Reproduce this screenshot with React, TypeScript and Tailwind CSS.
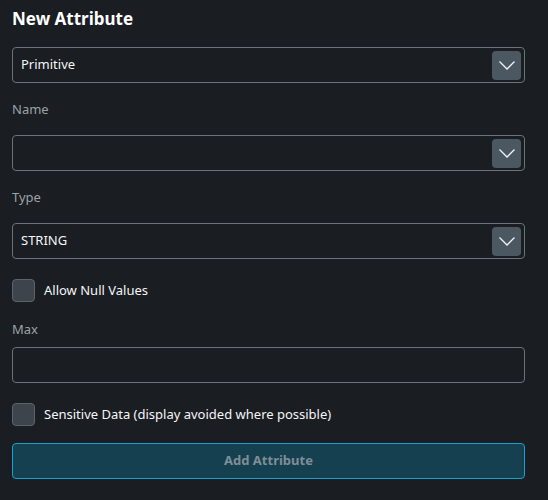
import { useState } from 'react'

function Chevron() {
	return (
		<svg width="18" height="18" viewBox="0 0 18 18" fill="none">
			<path d="M1.5 5.5 9 13l7.5-7.5" stroke="#f1f3f5" strokeWidth="1.3" />
		</svg>
	)
}

function SelectBox({ value }: { value: string }) {
	return (
		<div className="h-9 w-full flex items-center justify-between rounded-[4px] border border-[#68737c] bg-[#1a1d21] pl-2 pr-[3px]">
			<span className="text-[13px] text-[#f4f6f8]">{value}</span>
			<div className="h-[29px] w-[29px] flex items-center justify-center rounded-[4px] bg-[#4c5861]">
				<Chevron />
			</div>
		</div>
	)
}

function Check({ label }: { label: string }) {
	const [on, setOn] = useState(false)
	return (
		<label className="flex items-center gap-[9px] cursor-pointer">
			<span
				onClick={() => setOn(!on)}
				className="h-[23px] w-[23px] rounded-[4px] border border-[#5a646d] bg-[#3e444b]"
			/>
			<span className="text-[13px] text-[#f4f6f8]">{label}</span>
		</label>
	)
}

function Label({ children }: { children: string }) {
	return <div className="text-[13px] text-[#9aa3aa] leading-none">{children}</div>
}

export default function App() {
	return (
		<main
			className="min-h-screen w-full bg-[#1a1d21] pl-3 pr-[23px] pt-[9px] pb-5"
			style={{ fontFamily: '"Noto Sans", "Open Sans", sans-serif' }}
		>
			<h1 className="text-[17px] font-bold text-white leading-5">New Attribute</h1>

			<div className="mt-[18px]">
				<SelectBox value="Primitive" />
			</div>

			<div className="mt-[20px]">
				<Label>Name</Label>
			</div>
			<div className="mt-[19px]">
				<SelectBox value="" />
			</div>

			<div className="mt-[20px]">
				<Label>Type</Label>
			</div>
			<div className="mt-[19px]">
				<SelectBox value="STRING" />
			</div>

			<div className="mt-[20px]">
				<Check label="Allow Null Values" />
			</div>

			<div className="mt-[21px]">
				<Label>Max</Label>
			</div>
			<div className="mt-[11px] h-9 w-full rounded-[4px] border border-[#68737c] bg-[#1a1d21]" />

			<div className="mt-[20px]">
				<Check label="Sensitive Data (display avoided where possible)" />
			</div>

			<button className="mt-[17px] h-9 w-full rounded-[4px] border border-[#1b9fcd] bg-[#15404f] text-[13px] font-bold text-[#7d8e98]">
				Add Attribute
			</button>
		</main>
	)
}
